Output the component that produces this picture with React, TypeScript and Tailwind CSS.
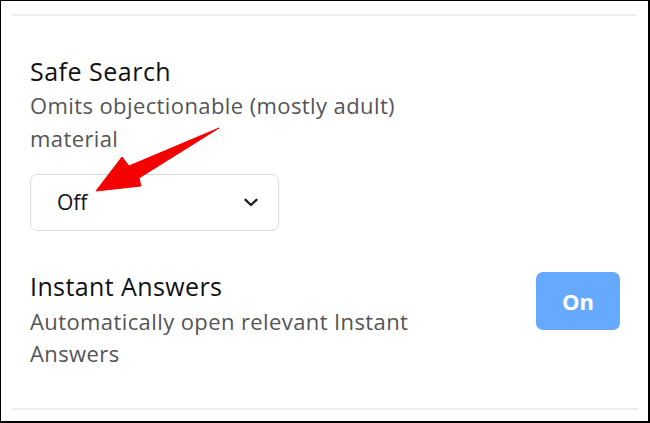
import React from 'react';

function Chevron() {
  return (
    <svg width="14" height="9" viewBox="0 0 14 9" fill="none">
      <path d="M1.5 1.8l5.5 5.2 5.5-5.2" stroke="#1a1a1a" strokeWidth="2.3" strokeLinecap="round" strokeLinejoin="round" />
    </svg>
  );
}

export default function App() {
  return (
    <div
      className="relative w-[650px] h-[423px] bg-white border-l border-t border-r-2 border-b-2 border-black overflow-hidden"
      style={{ fontFamily: '"Open Sans", "Liberation Sans", sans-serif' }}
    >
      <div className="px-[11px] pt-[13px]">
        <div className="h-[2px] bg-[#ededed]" />
      </div>

      {/* Safe Search */}
      <div className="pl-[29px] pr-[28px] pt-[40px]">
        <h2 className="text-[25px] leading-[30px] text-[#111] tracking-[0.5px]">Safe Search</h2>
        <p className="text-[22px] leading-[33px] text-[#555] tracking-[0.4px] w-[420px] mt-[3px]">
          Omits objectionable (mostly adult) material
        </p>
        <div className="mt-[19px] w-[249px] h-[57px] border border-[#dcdcdc] rounded-[7px] flex items-center justify-between pl-[26px] pr-[20px]">
          <span className="text-[21px] text-[#111]">Off</span>
          <Chevron />
        </div>
      </div>

      {/* Instant Answers */}
      <div className="pl-[29px] pr-[28px] pt-[40px] flex justify-between items-start">
        <div>
          <h2 className="text-[25px] leading-[30px] text-[#111] tracking-[0.4px]">Instant Answers</h2>
          <p className="text-[22px] leading-[32px] text-[#555] tracking-[0.4px] w-[420px] mt-[4px]">
            Automatically open relevant Instant Answers
          </p>
        </div>
        <button className="mt-[1px] w-[84px] h-[58px] rounded-[7px] bg-[#66aaff] text-white text-[22px] font-bold">
          On
        </button>
      </div>

      <div className="absolute left-[11px] right-[10px] top-[407px] h-[2px] bg-[#ededed]" />

      {/* red annotation arrow */}
      <svg className="absolute left-0 top-0 pointer-events-none" width="650" height="423">
        <polygon
          points="95,190 121,156 128,165 218,127 138,177 140,185"
          fill="#f50000"
          stroke="#f50000"
          strokeWidth="1"
          strokeLinejoin="round"
        />
      </svg>
    </div>
  );
}
